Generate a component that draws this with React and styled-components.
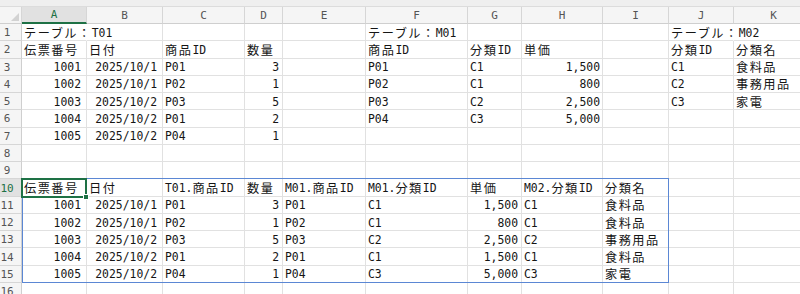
import React from "react";
import styled, { createGlobalStyle } from "styled-components";

const COLS = ["A", "B", "C", "D", "E", "F", "G", "H", "I", "J", "K"];
const WIDTHS = [65, 76, 82, 38, 83, 102, 54, 81, 66, 65, 80];
// A and B hold numbers formatted with a trailing space
const PAD_RIGHT = [5, 5, 3, 3, 3, 3, 3, 2, 3, 3, 3];
const ROW_H = 17.27;
const ROW_COUNT = 16;

const GREEN = "#1e7145";
const GRID = "#e1e1e1";
const HEAD_LINE = "#d6d6d6";

const SHEET = {
  1: ["テーブル：T01", "", "", "", "", "テーブル：M01", "", "", "", "テーブル：M02", ""],
  2: ["伝票番号", "日付", "商品ID", "数量", "", "商品ID", "分類ID", "単価", "", "分類ID", "分類名"],
  3: ["1001", "2025/10/1", "P01", "3", "", "P01", "C1", "1,500", "", "C1", "食料品"],
  4: ["1002", "2025/10/1", "P02", "1", "", "P02", "C1", "800", "", "C2", "事務用品"],
  5: ["1003", "2025/10/2", "P03", "5", "", "P03", "C2", "2,500", "", "C3", "家電"],
  6: ["1004", "2025/10/2", "P01", "2", "", "P04", "C3", "5,000", "", "", ""],
  7: ["1005", "2025/10/2", "P04", "1", "", "", "", "", "", "", ""],
  10: ["伝票番号", "日付", "T01.商品ID", "数量", "M01.商品ID", "M01.分類ID", "単価", "M02.分類ID", "分類名", "", ""],
  11: ["1001", "2025/10/1", "P01", "3", "P01", "C1", "1,500", "C1", "食料品", "", ""],
  12: ["1002", "2025/10/1", "P02", "1", "P02", "C1", "800", "C1", "食料品", "", ""],
  13: ["1003", "2025/10/2", "P03", "5", "P03", "C2", "2,500", "C2", "事務用品", "", ""],
  14: ["1004", "2025/10/2", "P01", "2", "P01", "C1", "1,500", "C1", "食料品", "", ""],
  15: ["1005", "2025/10/2", "P04", "1", "P04", "C3", "5,000", "C3", "家電", "", ""],
};

const WIDE_RE = /([\u3000-\u30ff\u4e00-\u9fff\uff00-\uffef]+)/;
const isNumber = (v) => /^[\d,/]+$/.test(v);
const textWidth = (v) =>
  [...v].reduce((w, ch) => w + (WIDE_RE.test(ch) ? 13.7 : 6.85), 0) + 5;

const Global = createGlobalStyle`
  html, body {
    margin: 0;
    padding: 0;
    background: #ffffff;
    overflow: hidden;
  }
  body {
    font-family: "DejaVu Sans Mono", "Noto Sans CJK JP", monospace;
  }
`;

const Page = styled.div`
  width: 800px;
  height: 294px;
  overflow: hidden;
  background: #ffffff;
`;

const Strip = styled.div`
  height: 7px;
  box-sizing: border-box;
  background: #efefef;
  border-bottom: 1px solid #dcdcdc;
`;

const Grid = styled.div`
  display: grid;
  grid-template-columns: 22px ${WIDTHS.map((w) => `${w}px`).join(" ")};
  grid-template-rows: 17px repeat(${ROW_COUNT}, ${ROW_H}px);
  width: max-content;
`;

const Placed = styled.div`
  grid-row: ${(p) => p.$r};
  grid-column: ${(p) => p.$c};
  box-sizing: border-box;
  min-width: 0;
`;

const Corner = styled(Placed)`
  position: relative;
  background: #f5f5f5;
  border-right: 1px solid ${HEAD_LINE};
  border-bottom: 1px solid #cfcfcf;

  &::after {
    content: "";
    position: absolute;
    right: 2px;
    bottom: 2px;
    border-left: 8px solid transparent;
    border-bottom: 8px solid #d2d2d2;
  }
`;

const ColHead = styled(Placed)`
  display: flex;
  align-items: center;
  justify-content: center;
  font-size: 11px;
  background: ${(p) => (p.$active ? "#e1e1e1" : "#f5f5f5")};
  color: ${(p) => (p.$active ? GREEN : "#555555")};
  border-right: 1px solid ${HEAD_LINE};
  border-bottom: ${(p) => (p.$active ? `2px solid ${GREEN}` : "1px solid #cfcfcf")};
`;

const RowHead = styled(Placed)`
  display: flex;
  align-items: center;
  justify-content: center;
  padding: 1px 7px 0 0;
  font-size: 11px;
  background: ${(p) => (p.$active ? "#e1e1e1" : "#f5f5f5")};
  color: ${(p) => (p.$active ? GREEN : "#555555")};
  border-right: 1px solid ${(p) => (p.$active ? GREEN : "#cfcfcf")};
  border-bottom: 1px solid ${HEAD_LINE};
`;

const Cell = styled(Placed)`
  position: relative;
  z-index: ${(p) => (p.$spill ? 1 : 0)};
  display: flex;
  align-items: center;
  justify-content: ${(p) => (p.$right ? "flex-end" : "flex-start")};
  padding: 1px ${(p) => p.$pad}px 0 2px;
  font-size: 11.4px;
  color: #151515;
  white-space: nowrap;
  overflow: ${(p) => (p.$spill ? "visible" : "hidden")};
  border-right: 1px solid ${(p) => (p.$spill ? "transparent" : GRID)};
  border-bottom: 1px solid ${GRID};
`;

const Wide = styled.span`
  font-family: "Noto Sans CJK JP", sans-serif;
  font-size: 12.2px;
  letter-spacing: 1.5px;
`;

const RangeOutline = styled(Placed)`
  z-index: 2;
  margin-top: -1px;
  border: 1px solid #5b87d4;
  pointer-events: none;
`;

const Selection = styled(Placed)`
  position: relative;
  z-index: 3;
  margin: -1px 0 -1px -1px;
  border: 2px solid ${GREEN};
  pointer-events: none;
`;

const Handle = styled.span`
  position: absolute;
  right: -4px;
  bottom: -4px;
  width: 4px;
  height: 4px;
  background: ${GREEN};
  border: 1px solid #ffffff;
`;

function Runs({ text }) {
  return text
    .split(WIDE_RE)
    .map((part, i) => (i % 2 ? <Wide key={i}>{part}</Wide> : part));
}

export default function App() {
  const rows = Array.from({ length: ROW_COUNT }, (_, i) => i + 1);

  return (
    <Page>
      <Global />
      <Strip />
      <Grid>
        <Corner $r={1} $c={1} />
        {COLS.map((c, i) => (
          <ColHead key={c} $r={1} $c={i + 2} $active={c === "A"}>
            {c}
          </ColHead>
        ))}
        {rows.map((r) => {
          const values = SHEET[r] || [];
          return (
            <React.Fragment key={r}>
              <RowHead $r={r + 1} $c={1} $active={r === 10}>
                {r}
              </RowHead>
              {COLS.map((c, i) => {
                const v = values[i] || "";
                const next = values[i + 1] || "";
                const spill = v && !next && textWidth(v) > WIDTHS[i];
                return (
                  <Cell
                    key={c}
                    $r={r + 1}
                    $c={i + 2}
                    $pad={PAD_RIGHT[i]}
                    $right={isNumber(v)}
                    $spill={spill}
                  >
                    <Runs text={v} />
                  </Cell>
                );
              })}
            </React.Fragment>
          );
        })}
        <RangeOutline $r="11 / 17" $c="2 / 11" />
        <Selection $r={11} $c={2}>
          <Handle />
        </Selection>
      </Grid>
    </Page>
  );
}
